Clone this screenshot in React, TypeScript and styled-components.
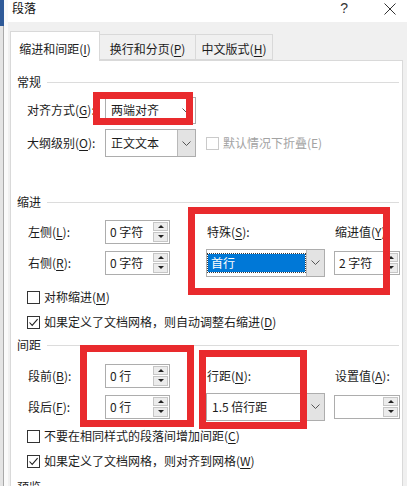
import React from 'react';
import styled, { createGlobalStyle } from 'styled-components';

const GlobalStyle = createGlobalStyle`
	html, body {
		margin: 0;
		padding: 0;
	}
	body {
		width: 407px;
		height: 486px;
		overflow: hidden;
		background: #f0f0f0;
		font-family: "Noto Sans CJK SC", "Noto Sans", sans-serif;
		font-size: 12px;
		line-height: 16px;
		color: #1c1c1c;
	}
`;

const Screen = styled.div`
	position: relative;
	display: flex;
	width: 407px;
	height: 486px;
	overflow: hidden;
`;

const WindowEdge = styled.div`
	flex: none;
	width: 8px;
	background:
		linear-gradient(#2f5a98, #2f5a98) 0 0 / 4px 26px no-repeat,
		linear-gradient(to right, #e4e4e4 0 3px, #a9a9a9 3px 4px, #fafafa 4px 8px);
`;

const Dialog = styled.div`
	flex: 1;
	display: flex;
	flex-direction: column;
	background: #f0f0f0;
`;

const TitleBar = styled.div`
	flex: none;
	display: flex;
	align-items: flex-start;
	height: 22px;
	padding: 1px 0 0 4px;
	box-sizing: border-box;
	background: #fff;
`;

const Title = styled.span`
	flex: 1;
	line-height: 14px;
	color: #111;
`;

const HelpMark = styled.span`
	margin-right: 36px;
	font-family: "Liberation Sans", sans-serif;
	font-size: 14px;
	line-height: 14px;
	color: #333;
`;

const CloseIcon = styled.svg`
	margin: 2px 12px 0 0;
`;

const Body = styled.div`
	flex: 1;
	display: flex;
	flex-direction: column;
	padding: 0 5px 0 2px;
`;

const TabStrip = styled.div`
	flex: none;
	display: flex;
	align-items: flex-end;
	height: 38px;
`;

const Tab = styled.div<{ $active?: boolean; $width: number }>`
	position: relative;
	z-index: ${({ $active }) => $active ? 2 : 1};
	box-sizing: border-box;
	width: ${({ $width }) => $width}px;
	height: ${({ $active }) => $active ? 30 : 26}px;
	margin-bottom: ${({ $active }) => $active ? -1 : 0}px;
	margin-left: -1px;
	padding-top: ${({ $active }) => $active ? 9 : 6}px;
	text-align: center;
	background: ${({ $active }) => $active ? '#fff' : '#f0f0f0'};
	border: 1px solid #d9d9d9;
	border-bottom: ${({ $active }) => $active ? 'none' : '1px solid #d9d9d9'};

	&:first-child {
		margin-left: 0;
	}
`;

const Panel = styled.div`
	flex: 1;
	display: flex;
	flex-direction: column;
	padding: 13px 3px 0 6px;
	background: #fff;
	border: 1px solid #d9d9d9;
`;

const SectionHeader = styled.div<{ $top?: number }>`
	display: flex;
	align-items: center;
	gap: 6px;
	height: 16px;
	margin-top: ${({ $top }) => $top || 0}px;

	&::after {
		content: "";
		flex: 1;
		height: 1px;
		background: #dcdcdc;
	}
`;

const FormRow = styled.div<{ $top?: number }>`
	display: flex;
	align-items: center;
	height: 30px;
	margin: ${({ $top }) => $top || 0}px 0 0 10px;
`;

const Label = styled.span<{ $width?: number }>`
	flex: none;
	width: ${({ $width }) => $width ? `${$width}px` : 'auto'};
	white-space: nowrap;
`;

const Key = styled.span`
	text-decoration: underline;
	text-underline-offset: 2px;
`;

const SelectBox = styled.div<{ $width: number; $height: number }>`
	display: flex;
	box-sizing: border-box;
	width: ${({ $width }) => $width}px;
	height: ${({ $height }) => $height}px;
	background: #fff;
	border: 1px solid #adadad;
`;

const SelectValue = styled.div<{ $selected?: boolean }>`
	flex: 1;
	display: flex;
	align-items: center;
	margin: ${({ $selected }) => $selected ? '4px 1px 4px 1px' : '0'};
	padding-left: ${({ $selected }) => $selected ? 3 : 5}px;
	color: ${({ $selected }) => $selected ? '#fff' : 'inherit'};
	background: ${({ $selected }) => $selected ? '#0078d7' : 'transparent'};
	outline: ${({ $selected }) => $selected ? '1px dotted #3a3a3a' : 'none'};
	white-space: nowrap;
`;

const SelectArrow = styled.div<{ $shaded?: boolean }>`
	flex: none;
	display: flex;
	align-items: center;
	justify-content: center;
	width: 17px;
	background: ${({ $shaded }) => $shaded ? '#e3e3e3' : '#fff'};
	border-left: 1px solid ${({ $shaded }) => $shaded ? '#b9b9b9' : '#fff'};
`;

const SpinBox = styled.div<{ $width?: number }>`
	display: flex;
	align-items: center;
	box-sizing: border-box;
	width: ${({ $width }) => $width || 65}px;
	height: 24px;
	background: #fff;
	border: 1px solid #adadad;
`;

const SpinValue = styled.span`
	flex: 1;
	padding-left: 4px;
	white-space: nowrap;
`;

const Spinner = styled.div`
	display: flex;
	flex-direction: column;
	gap: 1px;
	width: 15px;
	height: 20px;
	margin-right: 1px;
`;

const SpinButton = styled.div<{ $down?: boolean }>`
	flex: 1;
	display: flex;
	align-items: center;
	justify-content: center;
	background: #ececec;
	border: 1px solid #c6c6c6;

	&::before {
		content: "";
		width: 0;
		height: 0;
		border-left: 3px solid transparent;
		border-right: 3px solid transparent;
		${({ $down }) => $down ? 'border-top: 3px solid #222;' : 'border-bottom: 3px solid #222;'}
	}
`;

const FieldGrid = styled.div<{ $top?: number }>`
	display: grid;
	grid-template-columns: 78px 101px 128px 65px;
	grid-auto-rows: 31px;
	align-items: center;
	margin: ${({ $top }) => $top || 0}px 0 0 10px;
`;

const GridLabel = styled.span`
	padding-left: 1px;
	white-space: nowrap;
`;

const CheckRow = styled.label<{ $top?: number; $disabled?: boolean }>`
	display: flex;
	align-items: center;
	gap: 4px;
	height: 20px;
	margin: ${({ $top }) => $top || 0}px 0 0 ${({ $disabled }) => $disabled ? 0 : 10}px;
	color: ${({ $disabled }) => $disabled ? '#a3a3a3' : 'inherit'};
	white-space: nowrap;
`;

const CheckBox = styled.span<{ $disabled?: boolean }>`
	flex: none;
	display: flex;
	align-items: center;
	justify-content: center;
	box-sizing: border-box;
	width: 13px;
	height: 13px;
	background: #fff;
	border: 1px solid ${({ $disabled }) => $disabled ? '#cacaca' : '#333'};
`;

const Annotation = styled.div<{ $x: number; $y: number; $w: number; $h: number }>`
	position: absolute;
	left: ${({ $x }) => $x}px;
	top: ${({ $y }) => $y}px;
	width: ${({ $w }) => $w}px;
	height: ${({ $h }) => $h}px;
	box-sizing: border-box;
	border: 7px solid #e92a2d;
	pointer-events: none;
`;

const Chevron = () => (
	<svg width="9" height="5" viewBox="0 0 9 5">
		<polyline points="0.5,0.5 4.5,4.5 8.5,0.5" fill="none" stroke="#555" strokeWidth="1" />
	</svg>
);

const Tick = () => (
	<svg width="11" height="11" viewBox="0 0 11 11">
		<polyline points="1.5,5.5 4.2,8.4 9.6,2.2" fill="none" stroke="#222" strokeWidth="1.1" />
	</svg>
);

interface ISelectProps {
	value: string;
	width: number;
	height?: number;
	shaded?: boolean;
	selected?: boolean;
}
const Select: React.FC<ISelectProps> = ({ value, width, height = 28, shaded = true, selected }) => (
	<SelectBox $width={width} $height={height}>
		<SelectValue $selected={selected}>{value}</SelectValue>
		<SelectArrow $shaded={shaded}><Chevron /></SelectArrow>
	</SelectBox>
);

const Spin: React.FC<{ value?: string; width?: number }> = ({ value, width }) => (
	<SpinBox $width={width}>
		<SpinValue>{value}</SpinValue>
		<Spinner>
			<SpinButton />
			<SpinButton $down />
		</Spinner>
	</SpinBox>
);

interface ICheckProps {
	checked?: boolean;
	disabled?: boolean;
	top?: number;
	children: React.ReactNode;
}
const Check: React.FC<ICheckProps> = ({ checked, disabled, top, children }) => (
	<CheckRow $top={top} $disabled={disabled}>
		<CheckBox $disabled={disabled}>{checked && <Tick />}</CheckBox>
		<span>{children}</span>
	</CheckRow>
);

const App: React.FC = () => (
	<>
		<GlobalStyle />
		<Screen>
			<WindowEdge />
			<Dialog>
				<TitleBar>
					<Title>段落</Title>
					<HelpMark>?</HelpMark>
					<CloseIcon width="12" height="12" viewBox="0 0 12 12">
						<path d="M0.5 0.5 L11.5 11.5 M11.5 0.5 L0.5 11.5" stroke="#333" strokeWidth="1" />
					</CloseIcon>
				</TitleBar>
				<Body>
					<TabStrip>
						<Tab $active $width={90}>缩进和间距(<Key>I</Key>)</Tab>
						<Tab $width={97}>换行和分页(<Key>P</Key>)</Tab>
						<Tab $width={78}>中文版式(<Key>H</Key>)</Tab>
					</TabStrip>
					<Panel>
						<SectionHeader>常规</SectionHeader>
						<FormRow $top={5}>
							<Label $width={78}>对齐方式(<Key>G</Key>):</Label>
							<Select value="两端对齐" width={91} height={27} shaded={false} />
						</FormRow>
						<FormRow $top={3}>
							<Label $width={78}>大纲级别(<Key>O</Key>):</Label>
							<Select value="正文文本" width={91} />
							<FormRow>
								<Check disabled>默认情况下折叠(E)</Check>
							</FormRow>
						</FormRow>

						<SectionHeader $top={36}>缩进</SectionHeader>
						<FieldGrid $top={6}>
							<GridLabel>左侧(<Key>L</Key>):</GridLabel>
							<Spin value="0 字符" />
							<GridLabel>特殊(<Key>S</Key>):</GridLabel>
							<GridLabel>缩进值(<Key>Y</Key>):</GridLabel>
							<GridLabel>右侧(<Key>R</Key>):</GridLabel>
							<Spin value="0 字符" />
							<Select value="首行" width={119} selected />
							<Spin value="2 字符" width={66} />
						</FieldGrid>
						<Check top={9}>对称缩进(<Key>M</Key>)</Check>
						<Check top={5} checked>如果定义了文档网格，则自动调整右缩进(<Key>D</Key>)</Check>

						<SectionHeader $top={5}>间距</SectionHeader>
						<FieldGrid $top={7}>
							<GridLabel>段前(<Key>B</Key>):</GridLabel>
							<Spin value="0 行" />
							<GridLabel>行距(<Key>N</Key>):</GridLabel>
							<GridLabel>设置值(<Key>A</Key>):</GridLabel>
							<GridLabel>段后(<Key>F</Key>):</GridLabel>
							<Spin value="0 行" />
							<Select value="1.5 倍行距" width={119} />
							<Spin width={66} />
						</FieldGrid>
						<Check top={4}>不要在相同样式的段落间增加间距(<Key>C</Key>)</Check>
						<Check top={5} checked>如果定义了文档网格，则对齐到网格(<Key>W</Key>)</Check>

						<SectionHeader $top={8}>预览</SectionHeader>
					</Panel>
				</Body>
			</Dialog>

			<Annotation $x={93} $y={92} $w={100} $h={33} />
			<Annotation $x={188} $y={207} $w={202} $h={88} />
			<Annotation $x={80} $y={345} $w={114} $h={82} />
			<Annotation $x={199} $y={350} $w={108} $h={79} />
		</Screen>
	</>
);

export default App;
